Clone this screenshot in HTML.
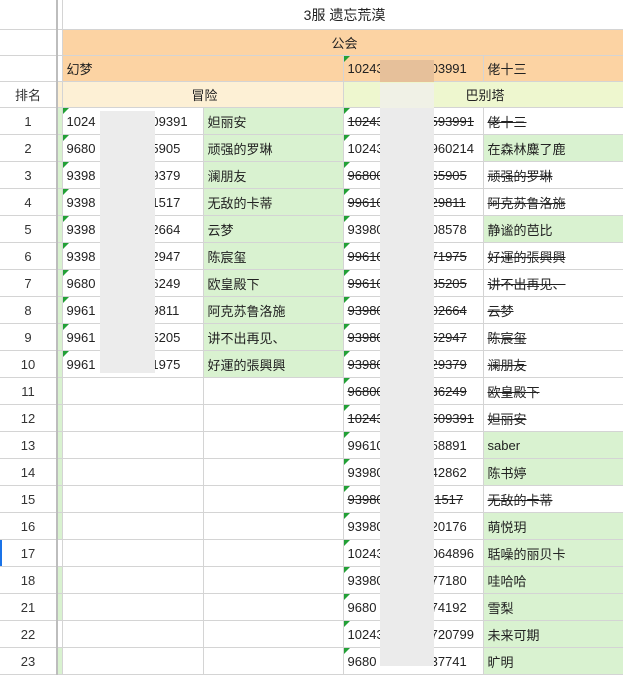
<!DOCTYPE html>
<html><head><meta charset="utf-8"><style>
body{margin:0;width:623px;height:677px;overflow:hidden;background:#fff;font-family:"Liberation Sans","Noto Sans CJK SC",sans-serif;font-size:13px;color:#222;position:relative}
table{border-collapse:collapse;table-layout:fixed;position:absolute;left:0;top:0;width:623px}
td{border:1px solid #d4d4d4;padding:0 0 0 4px;height:26px;white-space:nowrap;overflow:hidden;position:relative}
tr.h td{height:25px}
td.n{text-align:center;padding:0;background:#fff;color:#333;border-left:none}
td.sep{padding:0;background:#fff;border-left:2px solid #bdbdbd;border-right:1px solid #d4d4d4}
td.sg{background:#d9f2d0}
.t{height:29px;text-align:center;font-size:14px}
.o{background:#fcd3a3}
.y{background:#fdf0d5;text-align:center}
.b{background:#eef7cf;text-align:center}
.g{background:#d9f2d0}
.s{text-decoration:line-through}
.tri:before{content:"";position:absolute;left:0;top:0;border-top:6px solid #22a036;border-right:6px solid transparent}
.hd{background:#f8f9fa}
.p{position:absolute;background:#ebebeb}
</style></head><body>
<table>
<colgroup><col style="width:57px"><col style="width:5px"><col style="width:141px"><col style="width:140px"><col style="width:140px"><col style="width:140px"></colgroup>
<tr><td class="n hd" style="height:29px;border-top:none"></td><td class="sep" style="border-top:none"></td><td colspan="4" class="t" style="border-top:none">3服 遗忘荒漠</td></tr>
<tr class="h"><td class="n hd"></td><td class="sep o"></td><td colspan="4" class="o" style="text-align:center">公会</td></tr>
<tr class="h"><td class="n hd"></td><td class="sep o"></td><td colspan="2" class="o">幻梦</td><td class="o tri">10243&nbsp;&nbsp;&nbsp;&nbsp;&nbsp;&nbsp;&nbsp;&nbsp;&nbsp;&nbsp;&nbsp;&nbsp;&nbsp;03991</td><td class="o">佬十三</td></tr>
<tr class="h"><td class="n hd">排名</td><td class="sep" style="background:#fdf0d5"></td><td colspan="2" class="y">冒险</td><td colspan="2" class="b">巴别塔</td></tr>
<tr><td class="n">1</td><td class="sep sg"></td><td class="tri">1024<span style="margin-left:56px">09391</span></td><td class="g">妲丽安</td><td class="tri s">10243&nbsp;&nbsp;&nbsp;&nbsp;&nbsp;&nbsp;&nbsp;&nbsp;&nbsp;&nbsp;&nbsp;&nbsp;&nbsp;593991</td><td class="s">佬十三</td></tr>
<tr><td class="n">2</td><td class="sep sg"></td><td class="tri">9680<span style="margin-left:56px">5905</span></td><td class="g">顽强的罗琳</td><td class="tri">10243&nbsp;&nbsp;&nbsp;&nbsp;&nbsp;&nbsp;&nbsp;&nbsp;&nbsp;&nbsp;&nbsp;&nbsp;&nbsp;960214</td><td class="g">在森林麋了鹿</td></tr>
<tr><td class="n">3</td><td class="sep sg"></td><td class="tri">9398<span style="margin-left:56px">9379</span></td><td class="g">澜朋友</td><td class="tri s">96800&nbsp;&nbsp;&nbsp;&nbsp;&nbsp;&nbsp;&nbsp;&nbsp;&nbsp;&nbsp;&nbsp;&nbsp;&nbsp;65905</td><td class="s">顽强的罗琳</td></tr>
<tr><td class="n">4</td><td class="sep sg"></td><td class="tri">9398<span style="margin-left:56px">1517</span></td><td class="g">无敌的卡蒂</td><td class="tri s">99610&nbsp;&nbsp;&nbsp;&nbsp;&nbsp;&nbsp;&nbsp;&nbsp;&nbsp;&nbsp;&nbsp;&nbsp;&nbsp;29811</td><td class="s">阿克苏鲁洛施</td></tr>
<tr><td class="n">5</td><td class="sep sg"></td><td class="tri">9398<span style="margin-left:56px">2664</span></td><td class="g">云梦</td><td class="tri">93980&nbsp;&nbsp;&nbsp;&nbsp;&nbsp;&nbsp;&nbsp;&nbsp;&nbsp;&nbsp;&nbsp;&nbsp;&nbsp;08578</td><td class="g">静谧的芭比</td></tr>
<tr><td class="n">6</td><td class="sep sg"></td><td class="tri">9398<span style="margin-left:56px">2947</span></td><td class="g">陈宸玺</td><td class="tri s">99610&nbsp;&nbsp;&nbsp;&nbsp;&nbsp;&nbsp;&nbsp;&nbsp;&nbsp;&nbsp;&nbsp;&nbsp;&nbsp;71975</td><td class="s">好運的張興興</td></tr>
<tr><td class="n">7</td><td class="sep sg"></td><td class="tri">9680<span style="margin-left:56px">6249</span></td><td class="g">欧皇殿下</td><td class="tri s">99610&nbsp;&nbsp;&nbsp;&nbsp;&nbsp;&nbsp;&nbsp;&nbsp;&nbsp;&nbsp;&nbsp;&nbsp;&nbsp;35205</td><td class="s">讲不出再见、</td></tr>
<tr><td class="n">8</td><td class="sep sg"></td><td class="tri">9961<span style="margin-left:56px">9811</span></td><td class="g">阿克苏鲁洛施</td><td class="tri s">93980&nbsp;&nbsp;&nbsp;&nbsp;&nbsp;&nbsp;&nbsp;&nbsp;&nbsp;&nbsp;&nbsp;&nbsp;&nbsp;02664</td><td class="s">云梦</td></tr>
<tr><td class="n">9</td><td class="sep sg"></td><td class="tri">9961<span style="margin-left:56px">5205</span></td><td class="g">讲不出再见、</td><td class="tri s">93980&nbsp;&nbsp;&nbsp;&nbsp;&nbsp;&nbsp;&nbsp;&nbsp;&nbsp;&nbsp;&nbsp;&nbsp;&nbsp;52947</td><td class="s">陈宸玺</td></tr>
<tr><td class="n">10</td><td class="sep sg"></td><td class="tri">9961<span style="margin-left:56px">1975</span></td><td class="g">好運的張興興</td><td class="tri s">93980&nbsp;&nbsp;&nbsp;&nbsp;&nbsp;&nbsp;&nbsp;&nbsp;&nbsp;&nbsp;&nbsp;&nbsp;&nbsp;29379</td><td class="s">澜朋友</td></tr>
<tr><td class="n">11</td><td class="sep sg"></td><td></td><td></td><td class="tri s">96800&nbsp;&nbsp;&nbsp;&nbsp;&nbsp;&nbsp;&nbsp;&nbsp;&nbsp;&nbsp;&nbsp;&nbsp;&nbsp;36249</td><td class="s">欧皇殿下</td></tr>
<tr><td class="n">12</td><td class="sep sg"></td><td></td><td></td><td class="tri s">10243&nbsp;&nbsp;&nbsp;&nbsp;&nbsp;&nbsp;&nbsp;&nbsp;&nbsp;&nbsp;&nbsp;&nbsp;&nbsp;509391</td><td class="s">妲丽安</td></tr>
<tr><td class="n">13</td><td class="sep sg"></td><td></td><td></td><td class="tri">99610&nbsp;&nbsp;&nbsp;&nbsp;&nbsp;&nbsp;&nbsp;&nbsp;&nbsp;&nbsp;&nbsp;&nbsp;&nbsp;58891</td><td class="g">saber</td></tr>
<tr><td class="n">14</td><td class="sep sg"></td><td></td><td></td><td class="tri">93980&nbsp;&nbsp;&nbsp;&nbsp;&nbsp;&nbsp;&nbsp;&nbsp;&nbsp;&nbsp;&nbsp;&nbsp;&nbsp;42862</td><td class="g">陈书婷</td></tr>
<tr><td class="n">15</td><td class="sep sg"></td><td></td><td></td><td class="tri s">93980&nbsp;&nbsp;&nbsp;&nbsp;&nbsp;&nbsp;&nbsp;&nbsp;&nbsp;&nbsp;&nbsp;&nbsp;&nbsp;&nbsp;1517</td><td class="s">无敌的卡蒂</td></tr>
<tr><td class="n">16</td><td class="sep sg"></td><td></td><td></td><td class="tri">93980&nbsp;&nbsp;&nbsp;&nbsp;&nbsp;&nbsp;&nbsp;&nbsp;&nbsp;&nbsp;&nbsp;&nbsp;&nbsp;20176</td><td class="g">萌悦玥</td></tr>
<tr><td class="n" style="box-shadow:inset 2px 0 0 #1a73e8">17</td><td class="sep"></td><td></td><td></td><td class="tri">10243&nbsp;&nbsp;&nbsp;&nbsp;&nbsp;&nbsp;&nbsp;&nbsp;&nbsp;&nbsp;&nbsp;&nbsp;&nbsp;064896</td><td class="g">聒噪的丽贝卡</td></tr>
<tr><td class="n">18</td><td class="sep sg"></td><td></td><td></td><td class="tri">93980&nbsp;&nbsp;&nbsp;&nbsp;&nbsp;&nbsp;&nbsp;&nbsp;&nbsp;&nbsp;&nbsp;&nbsp;&nbsp;77180</td><td class="g">哇哈哈</td></tr>
<tr><td class="n">21</td><td class="sep sg"></td><td></td><td></td><td class="tri">9680&nbsp;&nbsp;&nbsp;&nbsp;&nbsp;&nbsp;&nbsp;&nbsp;&nbsp;&nbsp;&nbsp;&nbsp;&nbsp;&nbsp;&nbsp;74192</td><td class="g">雪梨</td></tr>
<tr><td class="n">22</td><td class="sep"></td><td></td><td></td><td class="tri">10243&nbsp;&nbsp;&nbsp;&nbsp;&nbsp;&nbsp;&nbsp;&nbsp;&nbsp;&nbsp;&nbsp;&nbsp;&nbsp;720799</td><td class="g">未来可期</td></tr>
<tr><td class="n">23</td><td class="sep sg"></td><td></td><td></td><td class="tri">9680&nbsp;&nbsp;&nbsp;&nbsp;&nbsp;&nbsp;&nbsp;&nbsp;&nbsp;&nbsp;&nbsp;&nbsp;&nbsp;&nbsp;&nbsp;37741</td><td class="g">旷明</td></tr>
</table>
<div class="p" style="left:100px;top:111px;width:55px;height:262px;background:#ececec"></div>
<div class="p" style="left:380px;top:60px;width:54px;height:22px;background:#e6c09a"></div>
<div class="p" style="left:380px;top:83px;width:54px;height:25px;background:#f0f1e6"></div>
<div class="p" style="left:380px;top:108px;width:54px;height:558px;background:#ebebeb"></div>
</body></html>
